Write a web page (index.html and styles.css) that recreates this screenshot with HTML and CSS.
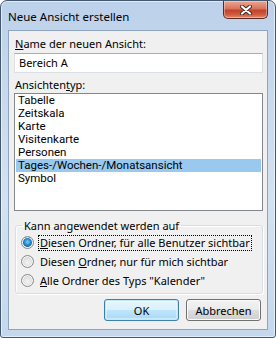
FILE: index.html
```html
<!DOCTYPE html>
<html lang="de">
<head>
<meta charset="utf-8">
<title>Neue Ansicht erstellen</title>
<link rel="stylesheet" href="styles.css">
</head>
<body>
<div class="window">
  <div class="titlebar">
    <span class="title">Neue Ansicht erstellen</span>
    <div class="close">
      <svg width="14" height="10" viewBox="0 0 14 10">
        <path d="M3 1.5 L11 8.5 M11 1.5 L3 8.5" stroke="#3b2a2a" stroke-width="4" stroke-linecap="round"/>
        <path d="M3 1.5 L11 8.5 M11 1.5 L3 8.5" stroke="#ffffff" stroke-width="2.2" stroke-linecap="round"/>
      </svg>
    </div>
  </div>
  <div class="client">
    <div class="lbl lbl-name"><u>N</u>ame der neuen Ansicht:</div>
    <div class="textbox">Bereich A</div>
    <div class="lbl lbl-type">Ansichten<u>t</u>yp:</div>
    <div class="listbox">
      <div class="item">Tabelle</div>
      <div class="item">Zeitskala</div>
      <div class="item">Karte</div>
      <div class="item">Visitenkarte</div>
      <div class="item">Personen</div>
      <div class="item selected">Tages-/Wochen-/Monatsansicht</div>
      <div class="item">Symbol</div>
    </div>
    <fieldset class="group">
      <legend>Kann angewendet werden auf</legend>
      <div class="radio-row"><span class="radio checked"></span><span class="rtext focus"><u>D</u>iesen Ordner, für alle Benutzer sichtbar</span></div>
      <div class="radio-row"><span class="radio"></span><span class="rtext">Diesen <u>O</u>rdner, nur für mich sichtbar</span></div>
      <div class="radio-row"><span class="radio"></span><span class="rtext"><u>A</u>lle Ordner des Typs "Kalender"</span></div>
    </fieldset>
    <div class="buttons">
      <div class="btn default">OK</div>
      <div class="btn">Abbrechen</div>
    </div>
  </div>
</div>
</body>
</html>
```
FILE: styles.css
```css
* { box-sizing: border-box; }
html, body { margin: 0; padding: 0; }
body {
  width: 276px;
  height: 338px;
  font-family: "Noto Sans", "Open Sans", sans-serif;
  font-size: 11px;
  line-height: 15px;
  color: #000;
  background: #fff;
}
.window {
  width: 276px;
  height: 338px;
  border: 1px solid #44586f;
  border-radius: 7px 7px 3px 3px;
  padding: 0 7px 7px 7px;
  background: linear-gradient(180deg, #bcd1ea 0%, #c9daee 30%, #d3e2f2 60%, #c4d7ec 100%);
  box-shadow: inset 0 0 0 1px rgba(255,255,255,0.55);
  display: flex;
  flex-direction: column;
}
.titlebar {
  height: 29px;
  display: flex;
  align-items: center;
}
.title {
  flex: 1;
  color: #000;
  font-size: 11.5px;
  padding-top: 1px;
}
.close {
  align-self: flex-start;
  width: 45px;
  height: 18px;
  border: 1px solid #5a2a22;
  border-top: none;
  border-radius: 0 0 5px 5px;
  background: linear-gradient(180deg, #e9a894 0%, #d8735a 45%, #c3432a 55%, #cf5c3f 80%, #e08d6f 100%);
  box-shadow: inset 0 0 0 1px rgba(255,255,255,0.35);
  display: flex;
  align-items: center;
  justify-content: center;
}
.client {
  flex: 1;
  background: #f0f0f0;
  border: 1px solid #8fa4bd;
  padding: 5px 4px 8px 5px;
  display: flex;
  flex-direction: column;
}
.lbl {
  padding-left: 1px;
  height: 15px;
}
.textbox {
  margin-top: 2px;
  height: 20px;
  background: #fff;
  border: 1px solid #dbdfe6;
  border-top-color: #abadb3;
  padding: 1px 0 0 4px;
  line-height: 16px;
}
.lbl-type { margin-top: 4px; }
.listbox {
  margin-top: 1px;
  height: 118px;
  background: #fff;
  border: 1px solid #828790;
  padding: 0 1px;
}
.item {
  height: 13px;
  line-height: 13px;
  padding-left: 2px;
  font-family: Roboto, "Noto Sans", sans-serif;
  font-size: 11.5px;
}
.item.selected { background: #99c9ef; }
.group {
  margin: 7px 0 0 1px;
  padding: 0 0 3px 0;
  border: 1px solid #d5dfe5;
  border-radius: 3px;
  box-shadow: inset 1px 1px 0 #fff, 1px 1px 0 #fff;
  min-width: 0;
}
.group legend {
  margin-left: 6px;
  padding: 0 2px;
  line-height: 15px;
}
.radio-row {
  height: 19px;
  display: flex;
  align-items: center;
  padding-left: 5px;
}
.radio {
  width: 13px;
  height: 13px;
  border-radius: 50%;
  border: 1px solid #8a8a8a;
  background: radial-gradient(circle at 50% 60%, #f4f4f4 0%, #dedede 55%, #cfcfcf 100%);
  box-shadow: inset 0 0 0 1px #f6f6f6;
  flex: none;
}
.radio.checked {
  background: radial-gradient(circle at 50% 45%, #7fd0f7 0%, #2592d6 35%, #0f5d9c 60%, #dfe6ec 62%, #f4f4f4 100%);
}
.rtext {
  margin-left: 4px;
  border: 1px dotted transparent;
  padding: 0 1px 0 1px;
  line-height: 14px;
  white-space: nowrap;
}
.rtext.focus { border-color: #000; }
.buttons {
  margin-top: auto;
  display: flex;
  justify-content: flex-end;
  gap: 7px;
  padding-right: 2px;
}
.btn {
  width: 75px;
  height: 22px;
  border: 1px solid #707070;
  border-radius: 3px;
  background: linear-gradient(180deg, #f2f2f2 0%, #ebebeb 49%, #dddddd 51%, #cfcfcf 100%);
  box-shadow: inset 0 0 0 1px #fcfcfc;
  display: flex;
  align-items: center;
  justify-content: center;
  line-height: 15px;
}
.btn.default {
  border-color: #3c7fb1;
  background: linear-gradient(180deg, #eaf6fd 0%, #d9f0fc 49%, #bee6fd 51%, #a7d9f5 100%);
  box-shadow: inset 0 0 0 1px #bfe7fd, inset 0 0 0 2px rgba(255,255,255,0.4);
}
```
